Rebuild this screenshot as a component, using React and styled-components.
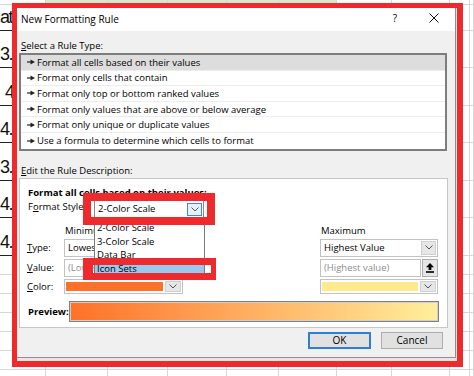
import React from "react";
import styled, { createGlobalStyle } from "styled-components";

const UI = `"Open Sans", "Noto Sans", "Liberation Sans", sans-serif`;

const GlobalStyle = createGlobalStyle`
  html, body { margin: 0; padding: 0; }
  body { width: 474px; height: 376px; overflow: hidden; background: #fff; font-family: ${UI}; }
  #root { position: relative; width: 474px; height: 376px; overflow: hidden; }
`;

/* ---------- spreadsheet behind the dialog ---------- */
const COLS = [46, 62, 60, 59, 52, 58, 55, 58, 20, 4];
const ROWS = [3, 28, 37, 37.5, 37.5, 37.5, 37.5, 37.5, 19, 19, 19, 19, 19, 19, 8];
const LEFT_TEXT = ["", "at", "3.", "4", "4.", "3.", "4.", "4."];

const Sheet = styled.div`
  display: grid;
  grid-template-columns: ${COLS.map((c) => c + "px").join(" ")};
  grid-template-rows: ${ROWS.map((r) => r + "px").join(" ")};
  width: 474px;
  height: 376px;
`;

const Cell = styled.div`
  box-sizing: border-box;
  border-right: 1px solid #d6d6d6;
  border-bottom: ${(p) => (p.$dark ? "1.5px solid #222" : "1px solid #d6d6d6")};
  background: ${(p) => (p.$green ? "#d6e8d0" : "transparent")};
  font: 18px/18px "Liberation Sans", Arial, sans-serif;
  letter-spacing: -1.5px;
  color: #111;
  display: flex;
  align-items: flex-end;
  padding-left: ${(p) => p.$indent || 0}px;
  padding-bottom: 4px;
  white-space: pre;
  overflow: hidden;
`;

/* ---------- annotation frame + dialog ---------- */
const RedFrame = styled.div`
  position: absolute;
  left: 12px;
  top: 3px;
  width: 451px;
  height: 364px;
  box-sizing: border-box;
  border-style: solid;
  border-color: #ee2a2d;
  border-width: 5px 6px 6px 5px;
  background: #e6e6e6;
  z-index: 2;
`;

const Dialog = styled.div`
  width: 439px;
  height: 350px;
  box-sizing: border-box;
  border-right: 1px solid #8e8e8e;
  border-bottom: 1px solid #8e8e8e;
  background: #f0f0f0;
  display: flex;
  flex-direction: column;
  font-size: 9.5px;
  color: #000;
`;

const TitleBar = styled.div`
  height: 23px;
  flex: none;
  background: #fff;
  display: flex;
  align-items: center;
  padding-left: 4px;
  padding-right: 9px;
`;

const Title = styled.div`
  flex: 1;
  font-size: 10px;
  padding-bottom: 2px;
`;

const TitleBtn = styled.div`
  width: ${(p) => p.$w}px;
  margin-left: ${(p) => p.$ml || 0}px;
  display: flex;
  justify-content: center;
  align-items: center;
  font-size: 10px;
  padding-bottom: 3px;
`;

const Body = styled.div`
  flex: 1;
  display: flex;
  flex-direction: column;
  padding: 8px 0 0 2px;
`;

const SectionLabel = styled.div`
  line-height: 13px;
  height: 13px;
  padding-left: 2px;
  margin-top: ${(p) => p.$mt || 0}px;
`;

const RuleList = styled.div`
  margin-top: 1px;
  width: 428px;
  box-sizing: border-box;
  border: 2px solid #7d7d7d;
  background: #fff;
`;

const RuleItem = styled.div`
  height: 15.6px;
  box-sizing: border-box;
  display: flex;
  align-items: center;
  gap: 2px;
  padding-left: 6px;
  background: ${(p) => (p.$selected ? "#dddddd" : "#fff")};
  border-bottom: ${(p) => (p.$last ? "none" : "1px solid #ededed")};
`;

const DescBox = styled.div`
  margin-top: 1.4px;
  width: 429px;
  height: 150px;
  box-sizing: border-box;
  border: 1px solid #c6c6c6;
  background: #fff;
  padding: 8px 0 0 8px;
  display: flex;
  flex-direction: column;
`;

const Heading = styled.div`
  font-weight: 700;
  line-height: 12px;
  height: 12px;
`;

const StyleRow = styled.div`
  display: flex;
  margin-top: 1px;
  height: 18px;
`;

const StyleLabel = styled.div`
  width: 66px;
  line-height: 14px;
`;

const ComboWrap = styled.div`
  position: relative;
  width: 110px;
  height: 18px;
`;

const Field = styled.div`
  box-sizing: border-box;
  width: 100%;
  height: 100%;
  border: 1px solid ${(p) => (p.$dark ? "#8a8a8a" : "#c2c2c2")};
  background: #fff;
  display: flex;
  align-items: stretch;
`;

const FieldText = styled.div`
  flex: 1;
  padding-left: 3px;
  display: flex;
  align-items: center;
  color: ${(p) => (p.$muted ? "#8c8c8c" : "#000")};
  white-space: nowrap;
  overflow: hidden;
`;

const DropBtn = styled.div`
  width: ${(p) => p.$w || 14}px;
  margin: ${(p) => (p.$active ? "2px 1px 1px 0" : "1px")};
  box-sizing: border-box;
  display: flex;
  align-items: center;
  justify-content: center;
  background: ${(p) => (p.$active ? "#e5f1fb" : "#e6e6e6")};
  border: 1px solid ${(p) => (p.$active ? "#3c8ad6" : "#d0d0d0")};
`;

const Swatch = styled.div`
  flex: 1;
  margin: 2px 1px;
  background: ${(p) => p.$color};
`;

const RefBtn = styled.div`
  width: 18px;
  margin-left: 1px;
  box-sizing: border-box;
  border: 1px solid #adadad;
  background: #e6e6e6;
  display: flex;
  align-items: center;
  justify-content: center;
`;

const InputRow = styled.div`
  display: flex;
  height: 100%;
`;

const DropList = styled.div`
  position: absolute;
  left: 0;
  top: 18px;
  width: 111px;
  box-sizing: border-box;
  border: 1px solid #7a7a7a;
  background: #fff;
  padding: 2px 0;
  z-index: 5;
`;

const DropItem = styled.div`
  height: 13.6px;
  line-height: 13.6px;
  padding-left: 2px;
  background: ${(p) => (p.$selected ? "#99c9ef" : "transparent")};
`;

const RedBox = styled.div`
  position: absolute;
  left: ${(p) => p.$x}px;
  top: ${(p) => p.$y}px;
  width: ${(p) => p.$w}px;
  height: ${(p) => p.$h}px;
  box-sizing: border-box;
  border-style: solid;
  border-color: #ee2a2d;
  border-width: ${(p) => p.$bw};
  z-index: 6;
`;

const ScaleGrid = styled.div`
  margin-top: 6px;
  margin-left: -1px;
  display: grid;
  grid-template-columns: 37px 119px 137px 118px;
  grid-template-rows: 13px 18px 18px 15px;
  row-gap: 2px;
`;

const ColHead = styled.div`
  grid-column: ${(p) => p.$col};
  padding-left: 1px;
  line-height: 13px;
`;

const RowLabel = styled.div`
  grid-column: 1;
  display: flex;
  align-items: center;
`;

const PreviewRow = styled.div`
  margin-top: 7px;
  display: flex;
  align-items: center;
`;

const PreviewLabel = styled.div`
  width: 41px;
  font-weight: 700;
`;

const PreviewBar = styled.div`
  width: 370px;
  height: 21px;
  box-sizing: border-box;
  border: 1px solid #7f7f7f;
  box-shadow: inset 0 0 0 1px #cfcfcf;
  background: linear-gradient(to right, #ff7128, #ffef9c);
`;

const ButtonRow = styled.div`
  margin-top: 4px;
  display: flex;
  justify-content: flex-end;
  gap: 10px;
  padding-right: 12px;
`;

const Button = styled.div`
  width: ${(p) => p.$w}px;
  height: 17px;
  box-sizing: border-box;
  background: #e1e1e1;
  border: ${(p) => (p.$default ? "2px solid #2f7fd0" : "1px solid #adadad")};
  display: flex;
  align-items: center;
  justify-content: center;
  font-size: 10px;
`;

const Chevron = () => (
  <svg width="8" height="5" viewBox="0 0 8 5">
    <polyline points="0.5,0.5 4,4 7.5,0.5" fill="none" stroke="#555" strokeWidth="1" />
  </svg>
);

const ItemArrow = () => (
  <svg width="8" height="6" viewBox="0 0 8 6">
    <line x1="0" y1="3" x2="4" y2="3" stroke="#222" strokeWidth="1.2" />
    <polygon points="3.5,0.5 8,3 3.5,5.5" fill="#222" />
  </svg>
);

const UploadIcon = () => (
  <svg width="8" height="10" viewBox="0 0 8 10">
    <polygon points="4,0 8,4.2 5.4,4.2 5.4,7 2.6,7 2.6,4.2 0,4.2" fill="#000" />
    <rect x="0" y="8.2" width="8" height="1.6" fill="#000" />
  </svg>
);

const CloseIcon = () => (
  <svg width="10" height="10" viewBox="0 0 10 10">
    <line x1="0.5" y1="0.5" x2="9.5" y2="9.5" stroke="#111" strokeWidth="1" />
    <line x1="9.5" y1="0.5" x2="0.5" y2="9.5" stroke="#111" strokeWidth="1" />
  </svg>
);

const RULES = [
  "Format all cells based on their values",
  "Format only cells that contain",
  "Format only top or bottom ranked values",
  "Format only values that are above or below average",
  "Format only unique or duplicate values",
  "Use a formula to determine which cells to format",
];

export default function App() {
  const cells = [];
  ROWS.forEach((_, r) => {
    COLS.forEach((__, c) => {
      const first = c === 0;
      cells.push(
        <Cell
          key={r + "-" + c}
          $dark={first && r >= 1 && r <= 7}
          $green={r === 0 && c >= 1 && c <= 5}
          $indent={first && r === 3 ? 5 : 0}
        >
          {first ? LEFT_TEXT[r] || "" : ""}
        </Cell>
      );
    });
  });

  return (
    <>
      <GlobalStyle />
      <Sheet>{cells}</Sheet>
      <RedFrame>
        <Dialog>
          <TitleBar>
            <Title>New Formatting Rule</Title>
            <TitleBtn $w={20}>?</TitleBtn>
            <TitleBtn $w={24} $ml={17}>
              <CloseIcon />
            </TitleBtn>
          </TitleBar>
          <Body>
            <SectionLabel>
              <u>S</u>elect a Rule Type:
            </SectionLabel>
            <RuleList>
              {RULES.map((r, i) => (
                <RuleItem key={r} $selected={i === 0} $last={i === RULES.length - 1}>
                  <ItemArrow />
                  {r}
                </RuleItem>
              ))}
            </RuleList>
            <SectionLabel $mt={13}>
              <u>E</u>dit the Rule Description:
            </SectionLabel>
            <DescBox>
              <Heading>Format all cells based on their values:</Heading>
              <StyleRow>
                <StyleLabel>
                  F<u>o</u>rmat Style:
                </StyleLabel>
                <ComboWrap>
                  <Field $dark>
                    <FieldText>2-Color Scale</FieldText>
                    <DropBtn $active $w={15}>
                      <Chevron />
                    </DropBtn>
                  </Field>
                  <DropList>
                    <DropItem>2-Color Scale</DropItem>
                    <DropItem>3-Color Scale</DropItem>
                    <DropItem>Data Bar</DropItem>
                    <DropItem $selected>Icon Sets</DropItem>
                  </DropList>
                  <RedBox $x={-11} $y={-7} $w={132} $h={32} $bw="8px" />
                  <RedBox $x={-11} $y={58} $w={133} $h={22} $bw="7px 5px 7px 10px" />
                </ComboWrap>
              </StyleRow>
              <ScaleGrid>
                <ColHead $col={2}>Minimum</ColHead>
                <ColHead $col={4}>Maximum</ColHead>

                <RowLabel>
                  <u>T</u>ype:
                </RowLabel>
                <Field>
                  <FieldText>Lowest Value</FieldText>
                  <DropBtn $w={15}>
                    <Chevron />
                  </DropBtn>
                </Field>
                <div />
                <Field>
                  <FieldText>Highest Value</FieldText>
                  <DropBtn $w={15}>
                    <Chevron />
                  </DropBtn>
                </Field>

                <RowLabel>
                  <u>V</u>alue:
                </RowLabel>
                <Field>
                  <FieldText $muted>(Lowest value)</FieldText>
                </Field>
                <div />
                <InputRow>
                  <Field>
                    <FieldText $muted>(Highest value)</FieldText>
                  </Field>
                  <RefBtn>
                    <UploadIcon />
                  </RefBtn>
                </InputRow>

                <RowLabel>
                  <u>C</u>olor:
                </RowLabel>
                <Field>
                  <Swatch $color="#ff7128" />
                  <DropBtn $w={16}>
                    <Chevron />
                  </DropBtn>
                </Field>
                <div />
                <Field>
                  <Swatch $color="#ffeb8e" />
                  <DropBtn $w={16}>
                    <Chevron />
                  </DropBtn>
                </Field>
              </ScaleGrid>
              <PreviewRow>
                <PreviewLabel>Preview:</PreviewLabel>
                <PreviewBar />
              </PreviewRow>
            </DescBox>
            <ButtonRow>
              <Button $w={63} $default>
                OK
              </Button>
              <Button $w={62}>Cancel</Button>
            </ButtonRow>
          </Body>
        </Dialog>
      </RedFrame>
    </>
  );
}
